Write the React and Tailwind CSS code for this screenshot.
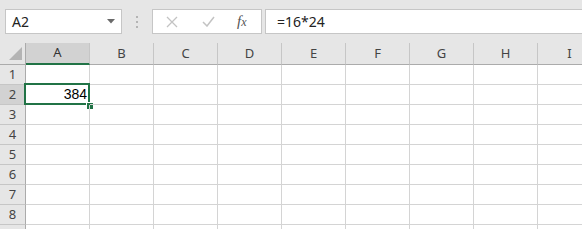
import React from 'react';

const COLS = ['A', 'B', 'C', 'D', 'E', 'F', 'G', 'H', 'I'];
const ROWS = [1, 2, 3, 4, 5, 6, 7, 8, 9];

const uiFont = { fontFamily: '"Noto Sans", "Open Sans", sans-serif' };

function Toolbar() {
  return (
    <div className="flex items-start h-[43px] bg-[#e6e6e6] pt-[9px] pl-[5px]" style={uiFont}>
      {/* name box */}
      <div className="w-[117px] h-[25px] bg-white border border-[#c6c6c6] flex items-center justify-between pl-[6px] pr-[6px]">
        <span className="text-[14px] text-[#222]">A2</span>
        <svg width="8" height="5" viewBox="0 0 8 5">
          <path d="M0 0 L8 0 L4 4.5 Z" fill="#6a6a6a" />
        </svg>
      </div>
      {/* grip dots */}
      <div className="w-[30px] h-[25px] flex flex-col items-center justify-center gap-[3px]">
        <span className="w-[2px] h-[2px] bg-[#b4b4b4]" />
        <span className="w-[2px] h-[2px] bg-[#b4b4b4]" />
        <span className="w-[2px] h-[2px] bg-[#b4b4b4]" />
      </div>
      {/* cancel / enter / fx */}
      <div className="w-[110px] h-[25px] bg-white border border-[#c6c6c6] flex items-center pl-[13px]">
        <svg width="12" height="12" viewBox="0 0 12 12" className="mr-[24px]">
          <path d="M1 1 L11 11 M11 1 L1 11" stroke="#c3c3c3" strokeWidth="1.3" />
        </svg>
        <svg width="13" height="11" viewBox="0 0 13 11" className="mr-[22px]">
          <path d="M1 6 L5 10 L12 1" stroke="#c3c3c3" strokeWidth="1.5" fill="none" />
        </svg>
        <span className="text-[15px] italic text-[#555] leading-none" style={{ fontFamily: '"Liberation Serif", serif' }}>
          f<span className="text-[12px]">x</span>
        </span>
      </div>
      {/* formula input */}
      <div className="flex-1 ml-[3px] h-[25px] bg-white border-y border-l border-[#c6c6c6] flex items-center pl-[11px]">
        <span className="text-[14px] text-[#222]">=16*24</span>
      </div>
    </div>
  );
}

function Corner() {
  return (
    <div className="h-[22px] bg-[#e6e6e6] border-r border-b border-[#ababab] flex items-end justify-end pr-[3px] pb-[4px]">
      <svg width="13" height="13" viewBox="0 0 13 13">
        <path d="M13 0 L13 13 L0 13 Z" fill="#b4b4b4" />
      </svg>
    </div>
  );
}

export default function App() {
  return (
    <div className="w-[582px] h-[229px] overflow-hidden bg-white">
      <Toolbar />
      <div className="grid grid-cols-[26px_repeat(9,64px)] w-[602px]" style={uiFont}>
        <Corner />
        {COLS.map((c) =>
          c === 'A' ? (
            <div
              key={c}
              className="h-[22px] bg-[#d2d2d2] border-r border-[#c6c6c6] border-b-2 border-b-[#217346] flex items-center justify-center text-[13px] text-[#333]"
            >
              {c}
            </div>
          ) : (
            <div
              key={c}
              className="h-[22px] bg-[#e6e6e6] border-r border-[#c6c6c6] border-b border-b-[#ababab] flex items-center justify-center text-[13px] text-[#444]"
            >
              {c}
            </div>
          )
        )}
        {ROWS.map((r) => (
          <React.Fragment key={r}>
            <div
              className={`h-[20px] border-r border-[#ababab] border-b border-b-[#c6c6c6] flex items-center justify-center text-[13px] text-[#444] ${
                r === 2 ? 'bg-[#d2d2d2]' : 'bg-[#e6e6e6]'
              }`}
            >
              {r}
            </div>
            {COLS.map((c) => (
              <div key={c} className="relative h-[20px] border-r border-b border-[#d4d4d4]">
                {r === 2 && c === 'A' && (
                  <>
                    <div className="absolute -left-[2px] -top-[2px] -right-[1px] -bottom-[1px] border-2 border-[#217346] flex items-center justify-end pr-[1px]">
                      <span className="text-[14px] text-black" style={{ fontFamily: '"Liberation Sans", Arial, sans-serif' }}>
                        384
                      </span>
                    </div>
                    <div className="absolute -right-[4px] -bottom-[5px] w-[7px] h-[7px] bg-[#217346] border-l border-t border-white" />
                  </>
                )}
              </div>
            ))}
          </React.Fragment>
        ))}
      </div>
    </div>
  );
}
